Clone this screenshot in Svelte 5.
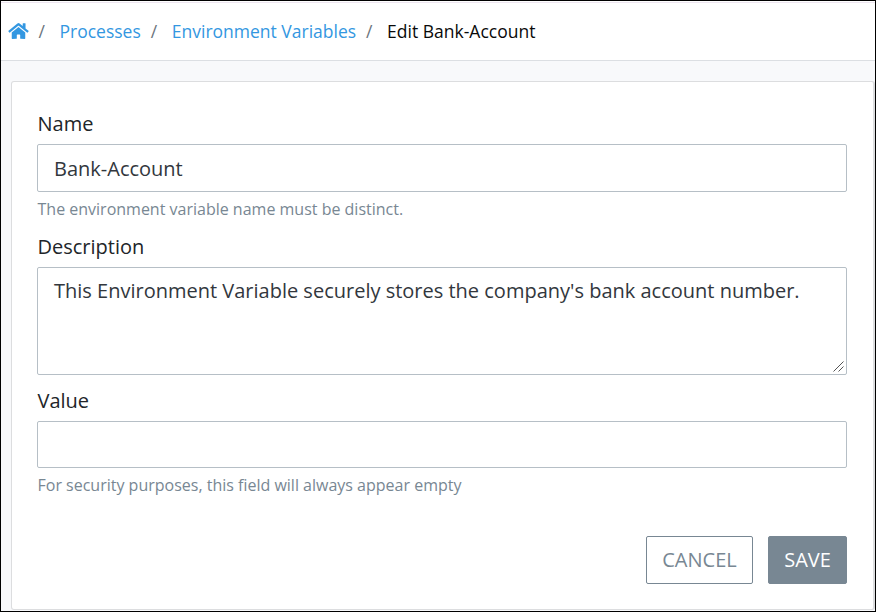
<script>
  let name = $state('Bank-Account');
  let description = $state("This Environment Variable securely stores the company's bank account number.");
  let value = $state('');
</script>

<div class="page">
  <nav>
    <a class="home" href="#home" aria-label="Home">
      <svg width="21" height="18" viewBox="0 0 576 512"><path fill="currentColor" d="M280.4 148.3 96 300.1V464a16 16 0 0 0 16 16l112-.3a16 16 0 0 0 16-16V368a16 16 0 0 1 16-16h64a16 16 0 0 1 16 16v95.6a16 16 0 0 0 16 16l112 .4a16 16 0 0 0 16-16V300L295.7 148.3a12.2 12.2 0 0 0-15.3 0zM571.6 251.5 488 182.6V44a12 12 0 0 0-12-12h-56a12 12 0 0 0-12 12v72.6L318.5 43a48 48 0 0 0-61 0L4.3 251.5a12 12 0 0 0-1.6 16.9l25.5 31a12 12 0 0 0 16.9 1.6L280.4 107.2a12.2 12.2 0 0 1 15.3 0L531 301a12 12 0 0 0 16.9-1.6l25.5-31a12 12 0 0 0-1.8-16.9z" /></svg>
    </a>
    <span class="sep first">/</span>
    <a class="processes" href="#processes">Processes</a>
    <span class="sep">/</span>
    <a class="variables" href="#variables">Environment Variables</a>
    <span class="sep">/</span>
    <span class="current">Edit Bank-Account</span>
  </nav>
  <main>
    <form>
      <label for="name">Name</label>
      <input id="name" bind:value={name} />
      <small>The environment variable name must be distinct.</small>
      <label for="description">Description</label>
      <div class="area">
        <textarea id="description" bind:value={description}></textarea>
        <svg class="grip" width="11" height="11" viewBox="0 0 11 11"><path d="M.5 10.5l10-10M5.500 10.500l5-5" stroke="#555" fill="none" /></svg>
      </div>
      <label for="value">Value</label>
      <input id="value" class="short" bind:value />
      <small>For security purposes, this field will always appear empty</small>
      <div class="actions">
        <button type="button" class="cancel">CANCEL</button>
        <button type="button" class="save">SAVE</button>
      </div>
    </form>
  </main>
</div>

<style>
  .page {
    box-sizing: border-box;
    width: 876px;
    height: 612px;
    border: 1px solid #000;
    background: #f8f9fb;
    font-family: "Open Sans", sans-serif;
    font-size: 20px;
    color: #212529;
    overflow: hidden;
  }
  nav {
    box-sizing: border-box;
    height: 60px;
    display: flex;
    align-items: center;
    padding: 1px 0 0 7px;
    background: linear-gradient(#fff 1px, #eee6f1 1px, #eee6f1 2px, #fff 2px);
    border-bottom: 1px solid #dcdfe3;
    font-size: 17.5px;
    white-space: nowrap;
  }
  a { color: #3397e1; text-decoration: none; }
  .home { display: flex; width: 21px; }
  .sep { width: 7px; margin: 0 14px 0 10px; color: #6c757d; }
  .sep.first { margin-left: 9.5px; }
  .current { color: #090909; }
  main { padding: 20px 0 1px 10px; }
  form {
    box-sizing: border-box;
    height: 529px;
    padding: 28px 25px 0;
    background: #fff;
    border: 1px solid #dcdddf;
    border-right-width: 2px;
    border-radius: 3px;
    display: flex;
    flex-direction: column;
  }
  label { height: 27px; line-height: 27px; margin-bottom: 7px; padding-left: 0.5px; }
  input, textarea {
    box-sizing: border-box;
    width: 810px;
    border: 1px solid #b6bfc6;
    border-radius: 2px;
    background: #fff;
    font: inherit;
    color: #32373d;
    padding: 0 16px;
    margin: 0;
    outline: none;
  }
  input { height: 48px; padding-top: 1px; }
  .short { height: 47px; }
  .area { position: relative; width: 810px; height: 108px; margin-bottom: 12px; }
  textarea { display: block; height: 108px; padding-top: 8px; line-height: 30px; resize: none; overflow: hidden; white-space: pre; }
  .grip { position: absolute; right: 3px; bottom: 3px; }
  small { height: 22px; line-height: 22px; margin: 6px 0 13px; padding-left: 0.5px; font-size: 16px; color: #788793; }
  .actions { display: flex; justify-content: flex-end; gap: 15px; width: 810px; margin-top: 27px; }
  button {
    box-sizing: border-box;
    height: 48px;
    padding: 0 0 2px;
    border: 1px solid #788793;
    border-radius: 2px;
    font: inherit;
    white-space: nowrap;
  }
  .cancel { width: 107px; background: #fff; color: #788793; }
  .save { width: 79px; background: #788793; color: #fff; }
</style>
